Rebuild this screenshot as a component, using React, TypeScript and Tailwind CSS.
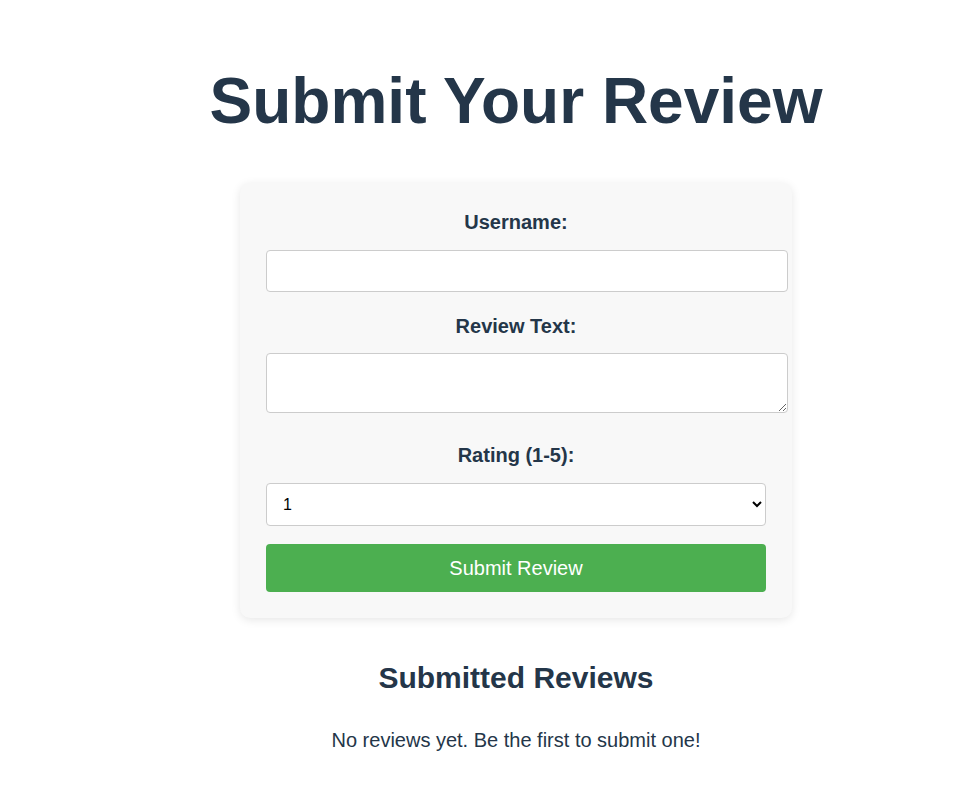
import React, { useState } from 'react';

interface Review {
  id: number;
  username: string;
  text: string;
  rating: number;
}

const App: React.FC = () => {
  const [username, setUsername] = useState<string>('');
  const [text, setText] = useState<string>('');
  const [rating, setRating] = useState<number>(1);
  const [reviews, setReviews] = useState<Review[]>([]);

  const handleSubmit = (event: React.FormEvent<HTMLFormElement>) => {
    event.preventDefault();
    if (username.trim() === '' || text.trim() === '') return;
    setReviews([...reviews, { id: reviews.length + 1, username: username.trim(), text: text.trim(), rating }]);
    setUsername('');
    setText('');
    setRating(1);
  };

  return (
    <div className="min-h-screen bg-white pl-[60px] pt-[65px] pb-10 font-['Liberation_Sans',Arial,sans-serif] text-[#243649]">
      <div className="flex flex-col items-center">
        <h1 className="text-[64px] font-bold leading-[1.15]">Submit Your Review</h1>

        <form
          onSubmit={handleSubmit}
          className="mt-[44px] flex w-[552px] flex-col rounded-[10px] bg-[#f8f8f8] px-[26px] pt-[28px] pb-[26px] shadow-[0_2px_10px_rgba(0,0,0,0.1)]"
        >
          <label htmlFor="username" className="text-center text-[20px] font-bold leading-[23px]">
            Username:
          </label>
          <input
            id="username"
            type="text"
            value={username}
            onChange={e => setUsername(e.target.value)}
            className="mt-[16px] box-content h-[20px] w-full rounded-[4px] border border-[#cccccc] bg-white px-[10px] py-[10px] text-[16px] text-black outline-none"
          />

          <label htmlFor="review" className="mt-[23px] text-center text-[20px] font-bold leading-[23px]">
            Review Text:
          </label>
          <textarea
            id="review"
            value={text}
            onChange={e => setText(e.target.value)}
            className="mt-[15px] box-content h-[38px] w-full rounded-[4px] border border-[#cccccc] bg-white px-[10px] py-[10px] text-[16px] text-black outline-none"
          />

          <label htmlFor="rating" className="mt-[31px] text-center text-[20px] font-bold leading-[23px]">
            Rating (1-5):
          </label>
          <select
            id="rating"
            value={rating}
            onChange={e => setRating(Number(e.target.value))}
            className="mt-[16px] h-[43px] w-full rounded-[4px] border border-[#cccccc] bg-white px-[12px] text-[16px] text-black outline-none"
          >
            {[1, 2, 3, 4, 5].map(n => (
              <option key={n} value={n}>
                {n}
              </option>
            ))}
          </select>

          <button
            type="submit"
            className="mt-[18px] h-[48px] w-full cursor-pointer rounded-[4px] bg-[#4caf50] text-[20px] text-white hover:bg-[#45a049]"
          >
            Submit Review
          </button>
        </form>

        <h2 className="mt-[43px] text-[30px] font-bold leading-[1.15]">Submitted Reviews</h2>

        {reviews.length === 0 ? (
          <p className="mt-[34px] text-[20px] leading-[1.15]">No reviews yet. Be the first to submit one!</p>
        ) : (
          <ul className="mt-[34px] w-[552px]">
            {reviews.map(review => (
              <li key={review.id} className="mb-3 rounded-[10px] bg-[#f8f8f8] p-4 text-[18px]">
                <strong>{review.username}</strong> ({review.rating}/5)
                <p>{review.text}</p>
              </li>
            ))}
          </ul>
        )}
      </div>
    </div>
  );
};

export default App;
